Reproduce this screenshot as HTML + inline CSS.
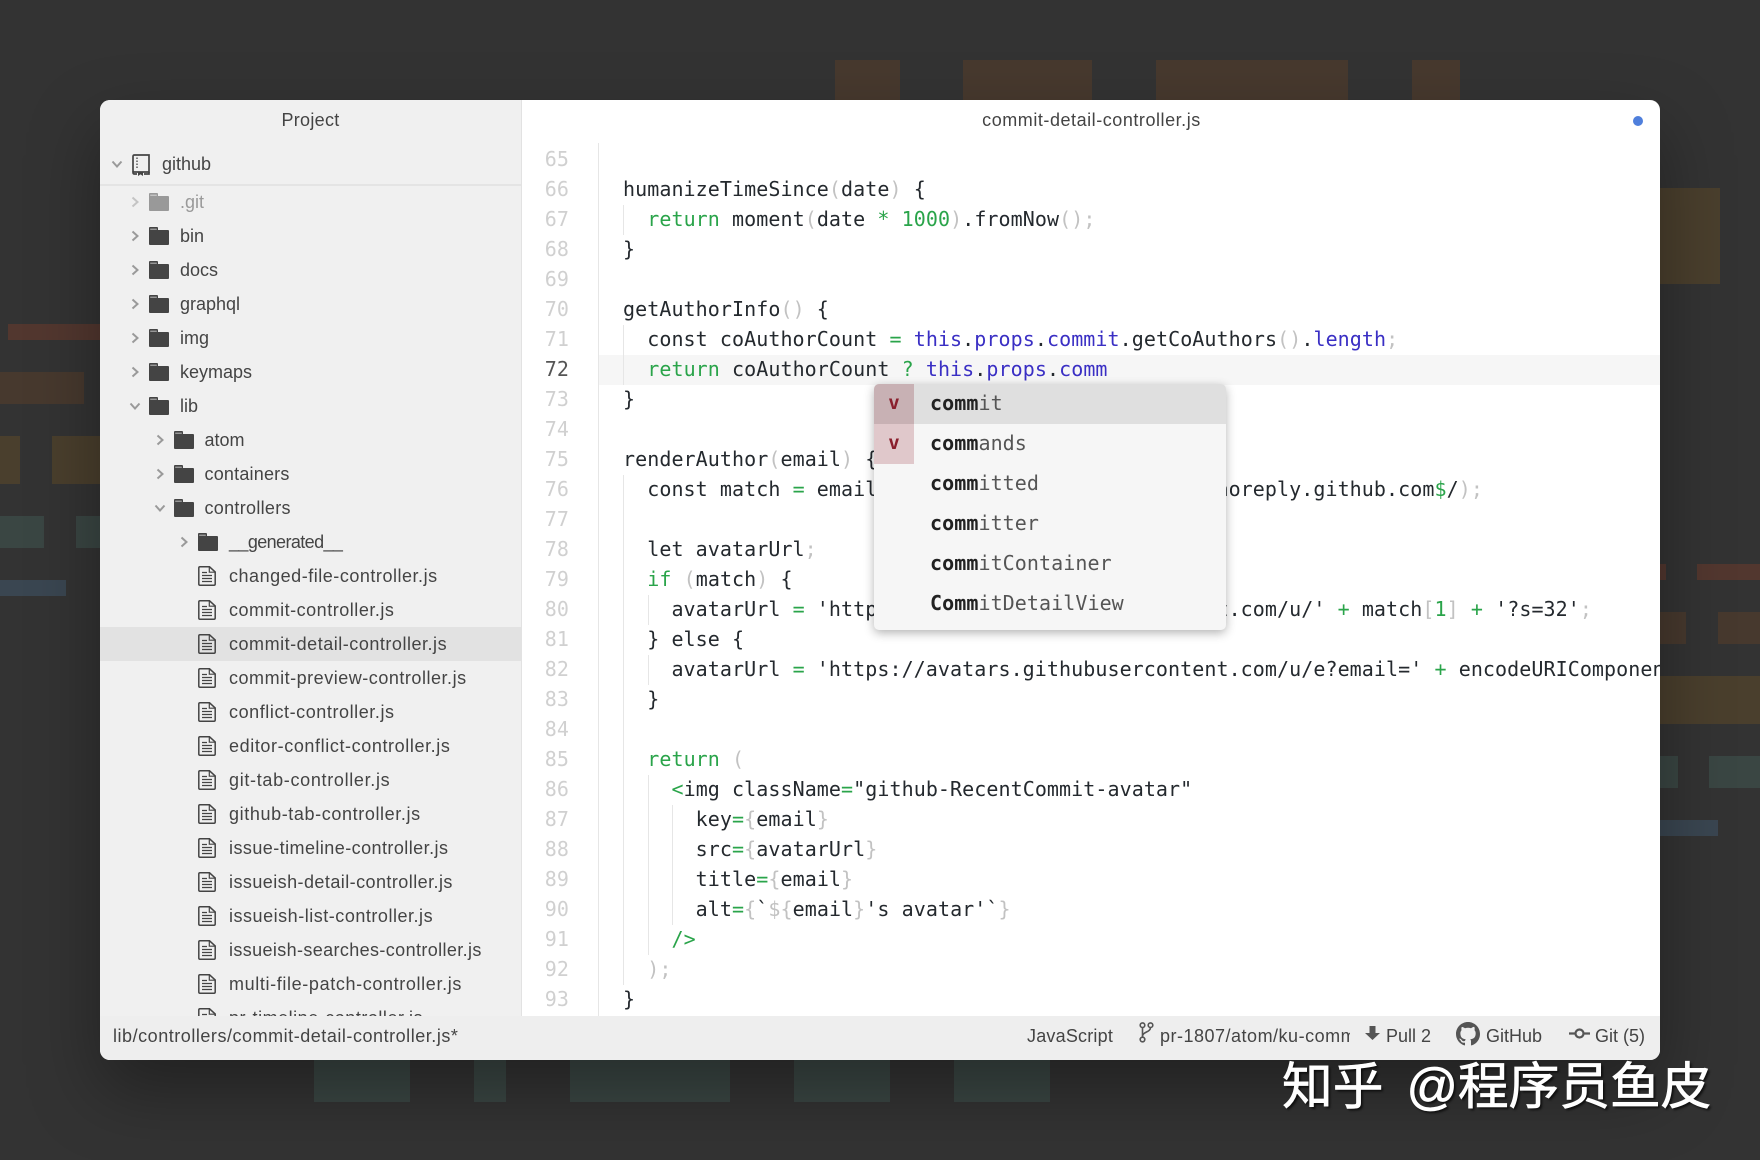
<!DOCTYPE html>
<html><head><meta charset="utf-8"><style>
*{box-sizing:border-box}
html,body{margin:0;padding:0;width:1760px;height:1160px;overflow:hidden;background:#333}
.bk{position:absolute}
.r{background:#52372f}.br{background:#47392e}.o{background:#4a3f2d}.t{background:#3a4643}.bl{background:#3a4651}
.win{position:absolute;left:100px;top:100px;width:1560px;height:960px;border-radius:10px;background:#fff;box-shadow:0 30px 70px rgba(0,0,0,.35)}
.clip{position:absolute;inset:0;border-radius:10px;overflow:hidden}
.side{position:absolute;left:0;top:0;width:422px;height:916px;background:#f0f0f0;border-right:1px solid #e2e2e2}
.s{font-family:"Liberation Sans",sans-serif;font-size:18px;color:#444;white-space:pre}
.a{position:absolute}
.tree{position:absolute;left:0;top:85px;width:421px;height:831px;overflow:hidden;white-space:normal}
.row{position:relative;height:34px;line-height:34px;--x:0px}
.row.l2{--x:24.5px}.row.l3{--x:49px}
.row.sel{background:#e2e2e2}
.row span{position:absolute;left:calc(var(--x) + 80px);top:0;white-space:pre}
.row.file span{letter-spacing:.52px}
.row svg{position:absolute}
.ch{left:calc(var(--x) + 29px);top:11px;width:12px;height:12px}
.fo{left:calc(var(--x) + 49px);top:8px;width:20px;height:18px}
.fi{left:calc(var(--x) + 49px);top:7px;width:18px;height:20px}
.dim{opacity:.5}
.status{position:absolute;left:0;top:916px;width:1560px;height:44px;background:#eee}
.status .s{position:absolute;top:0;line-height:40px}
.m{font-family:"DejaVu Sans Mono","Liberation Mono",monospace;font-size:20px;letter-spacing:.07px;white-space:pre}
.code{position:absolute;left:523px;top:44px;width:1037px;height:872px;overflow:hidden;color:#24292e;line-height:30px}
.nums{position:absolute;left:423px;top:44px;width:46px;text-align:right;color:#d0d0d0;line-height:30px;height:872px;overflow:hidden}
.nums b{font-weight:normal;color:#555}
.g{color:#2aa44a}.b{color:#3a2fc4}.p{color:#c2c2c2}
.gl{position:absolute;width:1px;background:#e6e6e6}
.pop{position:absolute;left:774px;top:284px;width:352px;height:246px;background:#f6f6f6;border-radius:5px;box-shadow:0 3px 10px rgba(0,0,0,.3);overflow:hidden}
.it{position:absolute;left:0;width:352px;height:40px;line-height:38px;color:#555}
.it.sl{background:#dfdfdf}
.it i{position:absolute;left:0;top:0;width:40px;height:40px;background:#e0c8cb;color:#8a1f2d;font-style:normal;font-weight:bold;text-align:center;font-size:19px}
.it.sl i{background:#c8b1b4}
.it span{position:absolute;left:56px;top:0}
.it b{color:#222}
.wm{position:absolute;left:1282px;top:1051px;font-family:"Liberation Sans","Noto Sans CJK SC",sans-serif;font-size:50.7px;font-weight:400;color:#fff;white-space:pre;line-height:72px;-webkit-text-stroke:.7px #fff;text-shadow:2px 2px 2px rgba(0,0,0,.7)}
.wm span{margin-left:9px}
</style></head><body>
<div class="bk r" style="left:8px;top:324px;width:92px;height:16px"></div>
<div class="bk br" style="left:0;top:372px;width:84px;height:32px"></div>
<div class="bk o" style="left:0;top:436px;width:20px;height:48px"></div>
<div class="bk o" style="left:52px;top:436px;width:48px;height:48px"></div>
<div class="bk t" style="left:0;top:516px;width:44px;height:32px"></div>
<div class="bk t" style="left:76px;top:516px;width:24px;height:32px"></div>
<div class="bk bl" style="left:0;top:580px;width:66px;height:16px"></div>
<div class="bk br" style="left:835px;top:60px;width:65px;height:40px"></div>
<div class="bk br" style="left:963px;top:60px;width:129px;height:40px"></div>
<div class="bk br" style="left:1156px;top:60px;width:192px;height:40px"></div>
<div class="bk br" style="left:1412px;top:60px;width:48px;height:40px"></div>
<div class="bk o" style="left:1660px;top:188px;width:60px;height:96px"></div>
<div class="bk r" style="left:1660px;top:564px;width:6px;height:16px"></div>
<div class="bk r" style="left:1697px;top:564px;width:63px;height:16px"></div>
<div class="bk br" style="left:1660px;top:612px;width:26px;height:32px"></div>
<div class="bk br" style="left:1718px;top:612px;width:42px;height:32px"></div>
<div class="bk o" style="left:1660px;top:676px;width:100px;height:48px"></div>
<div class="bk t" style="left:1660px;top:756px;width:18px;height:32px"></div>
<div class="bk t" style="left:1709px;top:756px;width:51px;height:32px"></div>
<div class="bk bl" style="left:1660px;top:820px;width:58px;height:16px"></div>
<div class="bk t" style="left:314px;top:1060px;width:96px;height:42px"></div>
<div class="bk t" style="left:474px;top:1060px;width:32px;height:42px"></div>
<div class="bk t" style="left:570px;top:1060px;width:160px;height:42px"></div>
<div class="bk t" style="left:794px;top:1060px;width:96px;height:42px"></div>
<div class="bk t" style="left:954px;top:1060px;width:96px;height:42px"></div>

<svg width="0" height="0" style="position:absolute"><defs>
<symbol id="r" viewBox="0 0 12 12"><path d="M3.500 1.500 8.500 6 3.500 10.500" fill="none" stroke="#9a9a9a" stroke-width="2"/></symbol>
<symbol id="d" viewBox="0 0 12 12"><path d="M1.500 3.500 6 8.500 10.500 3.500" fill="none" stroke="#9a9a9a" stroke-width="2"/></symbol>
<symbol id="f" viewBox="0 0 20 18"><path d="M1 0h7q1 0 1 1v2h10q1 0 1 1v13q0 1-1 1H1q-1 0-1-1V1q0-1 1-1z" fill="#444"/><path d="M1.200 2.200h6.600" stroke="#bbb" stroke-width="1"/></symbol>
<symbol id="t" viewBox="0 0 18 20"><path d="M2 .8h9.500L17.200 6v12q0 1.200-1.200 1.200H2Q.8 19.200.8 18V2Q.8.800 2 .800z" fill="none" stroke="#444" stroke-width="1.500"/><path d="M11.300 1v5.200h5.700" fill="none" stroke="#444" stroke-width="1.200"/><path d="M4 6.500h5M4 9.500h10M4 12.500h10M4 15.500h10" stroke="#444" stroke-width="1.300"/></symbol>
</defs></svg>

<div class="win"><div class="clip">
<div class="side"></div>
<div class="s a" style="left:0;width:421px;top:0;line-height:40px;text-align:center;letter-spacing:.3px">Project</div>
<svg class="a" style="left:11px;top:58px" width="12" height="12"><use href="#d"/></svg>
<svg class="a" style="left:32px;top:54px" width="18" height="22" viewBox="0 0 18 22"><path d="M2.500 1h14.500v17H2.500Q1 18 1 16.500V2.500Q1 1 2.500 1z" fill="none" stroke="#444" stroke-width="1.700"/><path d="M1 17v1.500Q1 20 2.500 20H5M12 20h5v-2" fill="none" stroke="#444" stroke-width="1.700"/><path d="M6 17.500h5v4.500l-2.500-1.600L6 22z" fill="#444"/><path d="M5 3.500v1.500M5 6.500V8M5 9.500V11M5 12.500V14" stroke="#444" stroke-width="1.300"/></svg>
<div class="s a" style="left:62px;top:47px;line-height:34px">github</div>
<div class="a" style="left:0;top:84px;width:421px;height:2px;background:#e4e4e4"></div>
<div class="tree s">
<div class="row l1 dim"><svg class="ch"><use href="#r"/></svg><svg class="fo"><use href="#f"/></svg><span>.git</span></div>
<div class="row l1"><svg class="ch"><use href="#r"/></svg><svg class="fo"><use href="#f"/></svg><span>bin</span></div>
<div class="row l1"><svg class="ch"><use href="#r"/></svg><svg class="fo"><use href="#f"/></svg><span>docs</span></div>
<div class="row l1"><svg class="ch"><use href="#r"/></svg><svg class="fo"><use href="#f"/></svg><span>graphql</span></div>
<div class="row l1"><svg class="ch"><use href="#r"/></svg><svg class="fo"><use href="#f"/></svg><span>img</span></div>
<div class="row l1"><svg class="ch"><use href="#r"/></svg><svg class="fo"><use href="#f"/></svg><span>keymaps</span></div>
<div class="row l1"><svg class="ch"><use href="#d"/></svg><svg class="fo"><use href="#f"/></svg><span>lib</span></div>
<div class="row l2"><svg class="ch"><use href="#r"/></svg><svg class="fo"><use href="#f"/></svg><span>atom</span></div>
<div class="row l2"><svg class="ch"><use href="#r"/></svg><svg class="fo"><use href="#f"/></svg><span style="letter-spacing:.2px">containers</span></div>
<div class="row l2"><svg class="ch"><use href="#d"/></svg><svg class="fo"><use href="#f"/></svg><span style="letter-spacing:.3px">controllers</span></div>
<div class="row l3"><svg class="ch"><use href="#r"/></svg><svg class="fo"><use href="#f"/></svg><span style="letter-spacing:-.6px">__generated__</span></div>
<div class="row l3 file"><svg class="fi"><use href="#t"/></svg><span>changed-file-controller.js</span></div>
<div class="row l3 file"><svg class="fi"><use href="#t"/></svg><span>commit-controller.js</span></div>
<div class="row l3 file sel"><svg class="fi"><use href="#t"/></svg><span>commit-detail-controller.js</span></div>
<div class="row l3 file"><svg class="fi"><use href="#t"/></svg><span>commit-preview-controller.js</span></div>
<div class="row l3 file"><svg class="fi"><use href="#t"/></svg><span style="letter-spacing:.57px">conflict-controller.js</span></div>
<div class="row l3 file"><svg class="fi"><use href="#t"/></svg><span style="letter-spacing:.6px">editor-conflict-controller.js</span></div>
<div class="row l3 file"><svg class="fi"><use href="#t"/></svg><span style="letter-spacing:.68px">git-tab-controller.js</span></div>
<div class="row l3 file"><svg class="fi"><use href="#t"/></svg><span style="letter-spacing:.61px">github-tab-controller.js</span></div>
<div class="row l3 file"><svg class="fi"><use href="#t"/></svg><span style="letter-spacing:.44px">issue-timeline-controller.js</span></div>
<div class="row l3 file"><svg class="fi"><use href="#t"/></svg><span style="letter-spacing:.44px">issueish-detail-controller.js</span></div>
<div class="row l3 file"><svg class="fi"><use href="#t"/></svg><span>issueish-list-controller.js</span></div>
<div class="row l3 file"><svg class="fi"><use href="#t"/></svg><span style="letter-spacing:.375px">issueish-searches-controller.js</span></div>
<div class="row l3 file"><svg class="fi"><use href="#t"/></svg><span style="letter-spacing:.63px">multi-file-patch-controller.js</span></div>
<div class="row l3 file"><svg class="fi"><use href="#t"/></svg><span>pr-timeline-controller.js</span></div>
</div>

<div class="s a" style="left:423px;width:1137px;top:0;line-height:40px;text-align:center;letter-spacing:.54px">commit-detail-controller.js</div>
<div class="a" style="left:1533px;top:16px;width:10px;height:10px;border-radius:50%;background:#4f7fdc"></div>

<div class="a" style="left:499px;top:255px;width:1061px;height:30px;background:#f6f6f6"></div>
<div class="gl" style="left:498px;top:43px;height:873px"></div>
<div class="gl" style="left:523px;top:105px;height:30px"></div>
<div class="gl" style="left:523px;top:225px;height:60px"></div>
<div class="gl" style="left:523px;top:375px;height:510px"></div>
<div class="gl" style="left:548px;top:495px;height:30px"></div>
<div class="gl" style="left:548px;top:555px;height:30px"></div>
<div class="gl" style="left:548px;top:675px;height:180px"></div>
<div class="gl" style="left:572px;top:705px;height:120px"></div>

<div class="nums m">65
66
67
68
69
70
71
<b>72</b>
73
74
75
76
77
78
79
80
81
82
83
84
85
86
87
88
89
90
91
92
93</div>

<div class="code m">
humanizeTimeSince<span class="p">(</span>date<span class="p">)</span> {
  <span class="g">return</span> moment<span class="p">(</span>date <span class="g">*</span> <span class="g">1000</span><span class="p">)</span>.fromNow<span class="p">();</span>
}

getAuthorInfo<span class="p">()</span> {
  const coAuthorCount <span class="g">=</span> <span class="b">this</span>.<span class="b">props</span>.<span class="b">commit</span>.getCoAuthors<span class="p">()</span>.<span class="b">length</span><span class="p">;</span>
  <span class="g">return</span> coAuthorCount <span class="g">?</span> <span class="b">this</span>.<span class="b">props</span>.<span class="b">comm</span>
}

renderAuthor<span class="p">(</span>email<span class="p">)</span> {
  const match <span class="g">=</span> email.match(/^(\d+)\+(.+)@users\.noreply.github.com<span class="g">$</span>/<span class="p">);</span>

  let avatarUrl<span class="p">;</span>
  <span class="g">if</span> <span class="p">(</span>match<span class="p">)</span> {
    avatarUrl <span class="g">=</span> 'https://avatars.githubusercontent.com/u/' <span class="g">+</span> match<span class="p">[</span><span class="g">1</span><span class="p">]</span> <span class="g">+</span> '?s=32'<span class="p">;</span>
  } else {
    avatarUrl <span class="g">=</span> 'https://avatars.githubusercontent.com/u/e?email=' <span class="g">+</span> encodeURIComponent<span class="p">(</span>email<span class="p">);</span>
  }

  <span class="g">return</span> <span class="p">(</span>
    <span class="g">&lt;</span>img className<span class="g">=</span>"github-RecentCommit-avatar"
      key<span class="g">=</span><span class="p">{</span>email<span class="p">}</span>
      src<span class="g">=</span><span class="p">{</span>avatarUrl<span class="p">}</span>
      title<span class="g">=</span><span class="p">{</span>email<span class="p">}</span>
      alt<span class="g">=</span><span class="p">{</span>`<span class="p">${</span>email<span class="p">}</span>'s avatar'`<span class="p">}</span>
    <span class="g">/&gt;</span>
  <span class="p">);</span>
}</div>

<div class="pop m">
<div class="it sl" style="top:0"><i>v</i><span><b>comm</b>it</span></div>
<div class="it" style="top:40px"><i>v</i><span><b>comm</b>ands</span></div>
<div class="it" style="top:80px"><span><b>comm</b>itted</span></div>
<div class="it" style="top:120px"><span><b>comm</b>itter</span></div>
<div class="it" style="top:160px"><span><b>comm</b>itContainer</span></div>
<div class="it" style="top:200px"><span><b>Comm</b>itDetailView</span></div>
</div>

<div class="status">
<div class="s" style="left:13px;letter-spacing:.53px">lib/controllers/commit-detail-controller.js*</div>
<div class="s" style="left:927px;letter-spacing:.2px">JavaScript</div>
<svg class="a" style="left:1039px;top:6px" width="15" height="21" viewBox="0 0 15 21" preserveAspectRatio="none"><g fill="none" stroke="#555" stroke-width="1.600"><circle cx="3.500" cy="3.200" r="2.300"/><circle cx="11.500" cy="3.200" r="2.300"/><circle cx="3.500" cy="17.500" r="2.300"/><path d="M3.500 5.500v9.700M11.500 5.500c0 5-8 4-8 9"/></g></svg>
<div class="a s" style="left:1060px;top:0;width:190px;overflow:hidden;line-height:40px;letter-spacing:.5px">pr-1807/atom/ku-commit-detail</div>
<svg class="a" style="left:1265px;top:10px" width="15" height="14" viewBox="0 0 15 14"><path d="M4.500 0h6v7h4.500L7.500 14 0 7h4.500z" fill="#555"/></svg>
<div class="s" style="left:1286px">Pull 2</div>
<svg class="a" style="left:1356px;top:6px" width="24" height="24" viewBox="0 0 16 16"><path fill="#555" d="M8 0C3.580 0 0 3.580 0 8c0 3.540 2.290 6.530 5.470 7.590.4.070.55-.17.55-.38 0-.19-.01-.82-.01-1.490-2.010.37-2.530-.49-2.690-.94-.09-.23-.48-.94-.82-1.130-.28-.15-.68-.52-.01-.53.63-.01 1.080.58 1.230.82.72 1.210 1.870.87 2.330.66.07-.52.28-.87.51-1.070-1.780-.2-3.640-.89-3.640-3.950 0-.87.31-1.590.82-2.150-.08-.2-.36-1.020.08-2.120 0 0 .67-.21 2.200.82.64-.18 1.320-.27 2-.27.68 0 1.360.09 2 .27 1.530-1.040 2.200-.82 2.200-.82.44 1.100.16 1.920.08 2.120.51.56.82 1.270.82 2.150 0 3.070-1.870 3.750-3.650 3.950.29.25.54.73.54 1.480 0 1.070-.01 1.930-.01 2.200 0 .21.15.46.55.38A8.013 8.013 0 0016 8c0-4.420-3.580-8-8-8z"/></svg>
<div class="s" style="left:1386px">GitHub</div>
<svg class="a" style="left:1469px;top:11px" width="21" height="13" viewBox="0 0 21 13"><circle cx="10.500" cy="6.500" r="4" fill="none" stroke="#555" stroke-width="2.200"/><path d="M0 6.500h6M15 6.500h6" stroke="#555" stroke-width="2.200"/></svg>
<div class="s" style="left:1495px">Git (5)</div>
</div>
</div></div>
<div class="wm">知乎<span> @程序员鱼皮</span></div>
</body></html>
